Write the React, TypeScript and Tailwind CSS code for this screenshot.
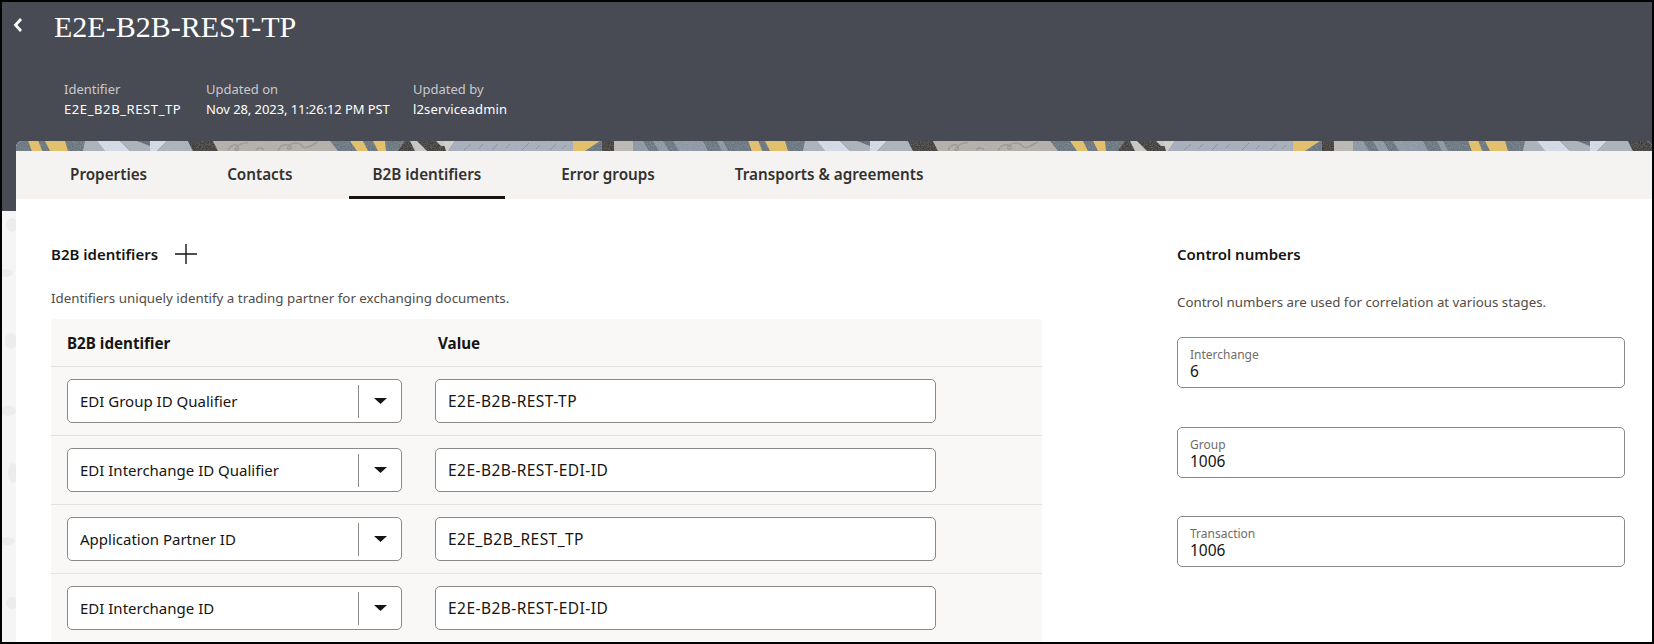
const font = "font-['Noto_Sans','Open_Sans',sans-serif]";

const rows = [
  { type: "EDI Group ID Qualifier", value: "E2E-B2B-REST-TP" },
  { type: "EDI Interchange ID Qualifier", value: "E2E-B2B-REST-EDI-ID" },
  { type: "Application Partner ID", value: "E2E_B2B_REST_TP" },
  { type: "EDI Interchange ID", value: "E2E-B2B-REST-EDI-ID" },
];

const tabs = ["Properties", "Contacts", "B2B identifiers", "Error groups", "Transports & agreements"];

const meta = [
  { label: "Identifier", value: "E2E_B2B_REST_TP", w: "w-[142px]", cls: "tracking-[0.6px]" },
  { label: "Updated on", value: "Nov 28, 2023, 11:26:12 PM PST", w: "w-[207px]", cls: "tracking-[-0.08px]" },
  { label: "Updated by", value: "l2serviceadmin", w: "", cls: "tracking-[0.15px]" },
];

const controls = [
  { label: "Interchange", value: "6" },
  { label: "Group", value: "1006" },
  { label: "Transaction", value: "1006" },
];

function Banner() {
  const slate = "#66737d";
  const yellow = "#e6c063";
  const gray = "#a9b2ba";
  const pale = "#d6deea";
  const dark = "#3e3b39";
  const beige = "#b4aea8";
  const blue = "#a5aebb";
  const stone = "#bcb8b2";
  const steel = "#8b96a3";
  return (
    <svg className="block w-full h-[10px]" height="10">
      <defs>
        <pattern id="tile" patternUnits="userSpaceOnUse" width="720" height="10">
          <rect width="720" height="10" fill={slate} />
          <polygon points="12.3,0 22.3,0 26.3,10 15.7,10" fill={yellow} />
          <polygon points="29,0 49,0 52,10 34,10" fill={yellow} />
          <polygon points="69,0 81,0 89,10 67,10" fill={gray} />
          <polygon points="81,0 104,0 114,10 89,10" fill={pale} />
          <polygon points="104,0 134,0 134,10 114,10" fill={gray} />
          <polygon points="121,0 134,0 134,5" fill="#5e6972" />
          <polygon points="134,0 151,0 141,10 134,10" fill={pale} />
          <polygon points="151,0 172,0 177,10 141,10" fill={gray} />
          <polygon points="172,0 197,0 202,10 177,10" fill={dark} />
          <polygon points="197,0 314,0 322,10 202,10" fill={beige} />
          <path
            d="M212 9c4-6 8-7 10-3s-5 5-2 1 8-6 12-5M262 10c2-6 8-8 12-5s-4 5-2 1 8-5 12-3 2 5 8 3 6-4 10-5M240 9c3-3 6-3 8 0"
            fill="none"
            stroke="#9c9691"
            strokeWidth="1.6"
          />
          <polygon points="334,0 347,0 352,10 341,10" fill={yellow} />
          <polygon points="357,0 369,0 370,10 362,10" fill={yellow} />
          <polygon points="389,0 427,0 432,10 382,10" fill={dark} />
          <polygon points="394,0 401,0 411,10 399,10" fill="#c9c8c5" />
          <polygon points="420,0 427,0 430,5 425,5" fill="#c9c8c5" />
          <polygon points="427,0 439,0 432,10 430,10" fill="#d2d1cc" />
          <polygon points="439,0 557,0 557,10 432,10" fill={blue} />
          <path
            d="M448 9l7-6M462 8l5-5M476 9l6-6M490 7l4-4M506 9l7-7M520 8l4-4M534 9l6-6M546 8l4-4"
            stroke="#87909e"
            strokeWidth="1"
          />
          <polygon points="557,0 584,0 569,10 557,10" fill={yellow} />
          <polygon points="586,0 598,0 598,10 586,10" fill={dark} />
          <polygon points="598,0 617,0 617,10 598,10" fill={stone} />
          <polygon points="617,0 720,0 720,10 617,10" fill={steel} />
          <polygon points="627,0 637,0 643,10 633,10" fill={slate} />
          <polygon points="647,0 657,0 663,10 653,10" fill={slate} />
          <polygon points="687,0 701,0 706,10 692,10" fill={slate} />
          <polygon points="707,0 720,0 720,10 712,10" fill={slate} />
        </pattern>
        {/* speckle over the artwork */}
        <filter id="grain" x="0" y="0" width="100%" height="100%">
          <feTurbulence type="fractalNoise" baseFrequency="0.9" numOctaves="2" seed="4" />
          <feColorMatrix values="0 0 0 0 0.55  0 0 0 0 0.55  0 0 0 0 0.55  1.6 0 0 0 -0.5" />
        </filter>
      </defs>
      <rect width="100%" height="10" fill="url(#tile)" />
      <rect width="100%" height="10" filter="url(#grain)" opacity="0.4" />
    </svg>
  );
}

function SelectBox({ text }: { text: string }) {
  return (
    <div className="w-[335px] h-[44px] flex items-center bg-white border border-[#8b8986] rounded-[5px]">
      <span className="flex-1 pl-3 text-[15px] text-[#161513]">{text}</span>
      <span className="w-px h-[33px] bg-[#8b8986]" />
      <span className="w-[42px] flex justify-center">
        <svg width="13" height="6" viewBox="0 0 13 6">
          <polygon points="0,0 13,0 6.5,6" fill="#161513" />
        </svg>
      </span>
    </div>
  );
}

function ControlField({ label, value }: { label: string; value: string }) {
  return (
    <div className="h-[51px] border border-[#8b8986] rounded-[5px] bg-white pl-3 pt-[9px]">
      <div className="text-[12px] leading-[16px] text-[#6f6c68]">{label}</div>
      <div className="text-[15.5px] leading-[17px] text-[#161513]">{value}</div>
    </div>
  );
}

export default function App() {
  return (
    <div className={`${font} relative w-[1654px] h-[644px] overflow-hidden border-2 border-black bg-[#f5f5f5]`}>
      {/* faint wallpaper left of the card */}
      <svg className="absolute left-0 top-[209px]" width="14" height="431">
        <g fill="#ececec">
          <ellipse cx="10" cy="14" rx="6" ry="7" />
          <ellipse cx="4" cy="62" rx="7" ry="4" />
          <ellipse cx="9" cy="130" rx="6" ry="8" />
          <ellipse cx="6" cy="200" rx="8" ry="5" />
          <ellipse cx="11" cy="262" rx="5" ry="10" />
          <ellipse cx="5" cy="330" rx="8" ry="4" />
          <ellipse cx="10" cy="392" rx="6" ry="6" />
        </g>
      </svg>

      <header className="h-[209px] bg-[#484b54] text-white">
        <div className="flex items-center h-[46px] pl-[11px]">
          <svg width="10" height="16" viewBox="0 0 10 16">
            <polyline points="8,2 2.5,8 8,14" fill="none" stroke="#ffffff" strokeWidth="2.8" />
          </svg>
          <h1 className="ml-[31px] mt-[4px] font-['Liberation_Serif',serif] text-[30px] leading-[36px] text-white">
            E2E-B2B-REST-TP
          </h1>
        </div>
        <div className="flex pl-[62px] pt-[31px] text-[13px] leading-[20px]">
          {meta.map((m) => (
            <div key={m.label} className={m.w}>
              <div className="text-[#c9cace]">{m.label}</div>
              <div className={`text-white ${m.cls}`}>{m.value}</div>
            </div>
          ))}
        </div>
      </header>

      <main className="relative -mt-[70px] ml-[14px] bg-white rounded-t-[6px] overflow-hidden h-[501px]">
        <Banner />
        <nav className="flex gap-8 pl-[30px] h-[48px] bg-[#f4f3f1]">
          {tabs.map((t) => (
            <div
              key={t}
              className={`px-6 h-full flex items-center pt-[2px] border-b-[3px] text-[15.25px] font-semibold text-[#33312f] ${
                t === "B2B identifiers" ? "border-[#161513]" : "border-transparent"
              }`}
            >
              {t}
            </div>
          ))}
        </nav>

        <div className="flex">
          <section className="w-[1026px] pl-[35px]">
            <div className="flex items-center h-[30px] mt-[40px]">
              <h2 className="text-[15px] font-semibold text-[#161513]">B2B identifiers</h2>
              <svg width="22" height="20" viewBox="0 0 22 20" className="ml-[17px]">
                <path d="M0 10h22M11 0v20" stroke="#161513" strokeWidth="1.4" />
              </svg>
            </div>
            <p className="mt-[19px] text-[13.35px] leading-[20px] text-[#4f4d4a]">
              Identifiers uniquely identify a trading partner for exchanging documents.
            </p>
            <div className="mt-[11px] bg-[#f9f8f6]">
              <div className="h-[48px] flex items-center pl-4 pt-[2px] text-[15.2px] font-bold text-[#161513] border-b border-[#e4e2de]">
                <span className="w-[371px]">B2B identifier</span>
                <span>Value</span>
              </div>
              {rows.map((r) => (
                <div key={r.type} className="h-[69px] flex items-center gap-[33px] pl-4 border-b border-[#e4e2de]">
                  <SelectBox text={r.type} />
                  <div className="w-[501px] h-[44px] flex items-center pl-3 pt-[2px] bg-white border border-[#8b8986] rounded-[5px] text-[15.5px] tracking-[0.45px] text-[#161513]">
                    {r.value}
                  </div>
                </div>
              ))}
            </div>
          </section>

          <aside className="ml-[135px] w-[448px]">
            <div className="flex items-center h-[30px] mt-[40px]">
              <h2 className="text-[15px] font-semibold text-[#161513]">Control numbers</h2>
            </div>
            <p className="mt-[23px] text-[13.3px] leading-[20px] text-[#4f4d4a]">
              Control numbers are used for correlation at various stages.
            </p>
            <div className="mt-[25px] flex flex-col gap-[38.6px]">
              {controls.map((c) => (
                <ControlField key={c.label} label={c.label} value={c.value} />
              ))}
            </div>
          </aside>
        </div>
      </main>
    </div>
  );
}
